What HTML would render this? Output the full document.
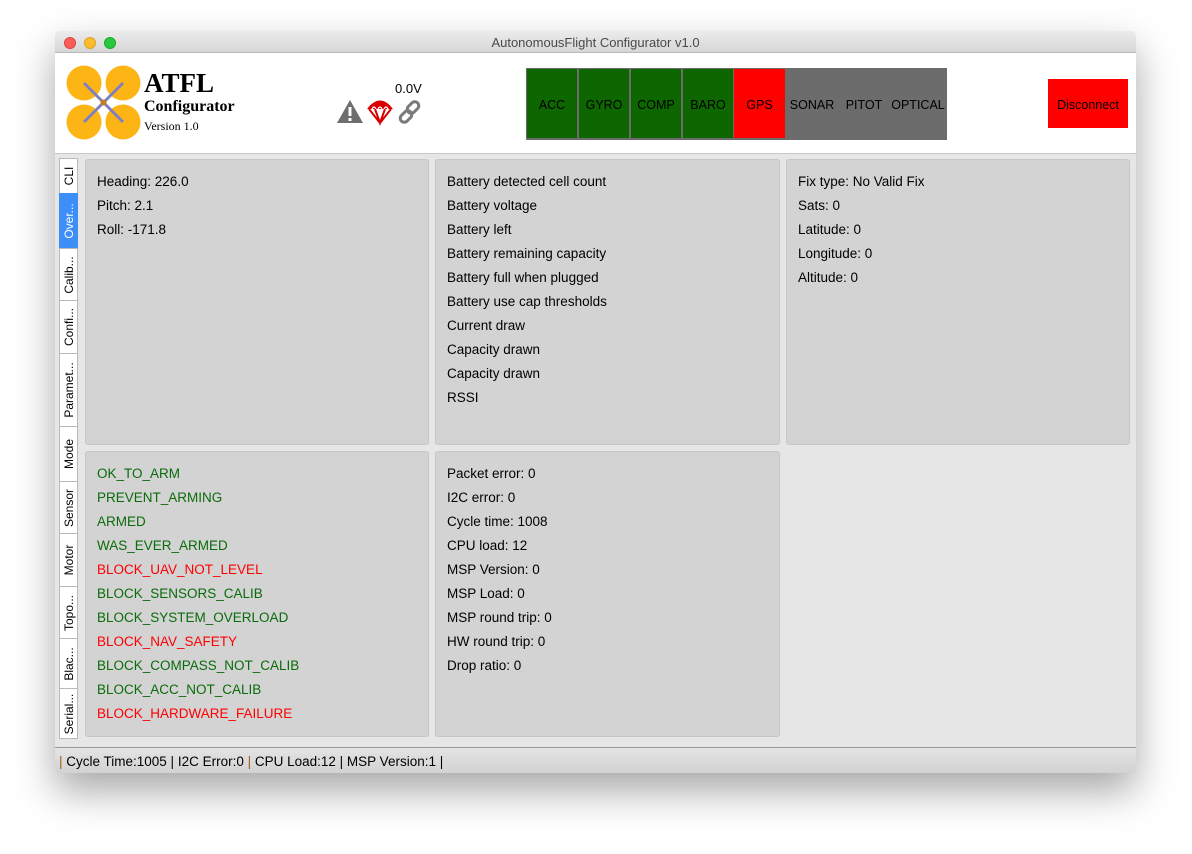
<!DOCTYPE html>
<html><head><style>
*{margin:0;padding:0;box-sizing:border-box}
body{width:1192px;height:854px;background:#fff;position:relative;overflow:hidden;font-family:"Liberation Sans",sans-serif;font-size:13px;color:#000}
.win{position:absolute;left:55px;top:31px;width:1081px;height:742px;background:#e6e6e6;box-shadow:0 18px 40px rgba(0,0,0,.35);border-radius:5px 5px 3px 3px;overflow:hidden}
.title{position:absolute;left:0;top:0;width:100%;height:22px;background:linear-gradient(#ececec,#d6d6d6);border-bottom:1px solid #b8b8b8;text-align:center;font-size:13px;line-height:23px;color:#4a4a4a}
.dot{position:absolute;top:6px;width:12px;height:12px;border-radius:50%}
.head{position:absolute;left:0;top:22px;width:100%;height:101px;background:#fff;border-bottom:1px solid #c8c8c8}
.abs{position:absolute}
.panel{position:absolute;background:#d3d3d3;border:1px solid #c6c6c6;border-radius:3px}
.panel div{height:24px;line-height:23px;font-size:13.5px}
.tabs{position:absolute;left:4px;top:127px;width:18px}
.tab{position:absolute;left:0;width:19px;background:#fff;border:1px solid #b9b9b9;}
.tab span{position:absolute;left:50%;top:50%;transform:translate(-50%,-50%) rotate(-90deg);white-space:nowrap;font-size:12px}
.g{color:#0a6b0a}.r{color:#ff0000}
.sb{position:absolute;left:0;top:716px;width:100%;height:26px;background:linear-gradient(#e4e4e4,#d2d2d2);border-top:1px solid #9a9a9a;font-size:13.5px;line-height:28px;padding-left:4px}
.cell{position:absolute;top:1px;height:69px;line-height:73px;text-align:center;font-size:12.5px;width:50px}
</style></head><body>
<div class="win">
 <div class="title">AutonomousFlight Configurator v1.0
  <div class="dot" style="left:9px;background:#fc5f57;border:1px solid #e0443e"></div>
  <div class="dot" style="left:29px;background:#fdbc2e;border:1px solid #dea123"></div>
  <div class="dot" style="left:49px;background:#28c840;border:1px solid #1aab29"></div>
 </div>
 <div class="head">
  <svg class="abs" style="left:11px;top:12px" width="75" height="75" viewBox="0 0 75 75">
   <circle cx="18" cy="18" r="17.5" fill="#fdb515"/><circle cx="57" cy="18" r="17.5" fill="#fdb515"/>
   <circle cx="18" cy="57" r="17.5" fill="#fdb515"/><circle cx="57" cy="57" r="17.5" fill="#fdb515"/>
   <line x1="18" y1="18" x2="57" y2="57" stroke="#8080c0" stroke-width="3"/>
   <line x1="57" y1="18" x2="18" y2="57" stroke="#8080c0" stroke-width="3"/>
   <circle cx="37.5" cy="37.5" r="3" fill="#c08020"/>
  </svg>
  <div class="abs" style="left:89px;top:15px;font-family:'Liberation Serif',serif;font-weight:bold;font-size:27px">ATFL</div>
  <div class="abs" style="left:89px;top:45px;font-family:'Liberation Serif',serif;font-weight:bold;font-size:16px">Configurator</div>
  <div class="abs" style="left:89px;top:66px;font-family:'Liberation Serif',serif;font-size:12px">Version 1.0</div>
  <div class="abs" style="left:340px;top:28px;font-size:13px">0.0V</div>
  <svg class="abs" style="left:281px;top:46px" width="28" height="26" viewBox="0 0 28 26"><path d="M14 1 L27 24 H1 Z" fill="#6e6e6e"/><rect x="12.5" y="8" width="3" height="9" fill="#fff"/><rect x="12.5" y="19" width="3" height="3" fill="#fff"/></svg>
  <svg class="abs" style="left:311px;top:45px" width="28" height="28" viewBox="0 0 28 28"><path d="M1 11 Q14 -6 27 11 Z" fill="#d80000"/><path d="M3 11 L14 25 L25 11 M9 11 L14 25 L19 11" stroke="#d80000" stroke-width="2" fill="none"/><path d="M6 11 Q8 7 10 11 M12 11 Q14 7 16 11 M18 11 Q20 7 22 11" stroke="#fff" stroke-width="1.2" fill="none"/></svg>
  <svg class="abs" style="left:342px;top:46px" width="26" height="26" viewBox="0 0 26 26"><g fill="none" stroke="#7a7a7a" stroke-width="3"><rect x="12" y="2" width="8" height="13" rx="4" transform="rotate(45 16 8.5)"/><rect x="5" y="11" width="8" height="13" rx="4" transform="rotate(45 9 17.5)"/></g></svg>
  <div class="abs" style="left:471px;top:15px;width:421px;height:72px;background:#6c6c6c">
   <div class="cell" style="left:1px;background:#0e6600">ACC</div>
   <div class="cell" style="left:53px;background:#0e6600">GYRO</div>
   <div class="cell" style="left:105px;background:#0e6600">COMP</div>
   <div class="cell" style="left:157px;background:#0e6600">BARO</div>
   <div class="cell" style="left:208px;width:51px;background:#ff0000">GPS</div>
   <div class="cell" style="left:260px;width:52px">SONAR</div>
   <div class="cell" style="left:312px;width:52px">PITOT</div>
   <div class="cell" style="left:364px;width:56px">OPTICAL</div>
  </div>
  <div class="abs" style="left:993px;top:26px;width:80px;height:49px;background:#ff0000;line-height:52px;text-align:center;font-size:12.5px">Disconnect</div>
 </div>
 <div class="tabs">
  <div class="tab" style="top:0;height:36px"><span>CLI</span></div>
  <div class="tab" style="top:35px;height:56px;background:#3d8ef6;border-color:#3d8ef6;color:#fff"><span>Over...</span></div>
  <div class="tab" style="top:90px;height:53px"><span>Calib...</span></div>
  <div class="tab" style="top:142px;height:54px"><span>Confi...</span></div>
  <div class="tab" style="top:195px;height:74px"><span>Paramet...</span></div>
  <div class="tab" style="top:268px;height:56px"><span>Mode</span></div>
  <div class="tab" style="top:323px;height:53px"><span>Sensor</span></div>
  <div class="tab" style="top:375px;height:54px"><span>Motor</span></div>
  <div class="tab" style="top:428px;height:53px"><span>Topo...</span></div>
  <div class="tab" style="top:480px;height:51px"><span>Blac...</span></div>
  <div class="tab" style="top:530px;height:51px"><span>Serial...</span></div>
 </div>
 <div class="panel" style="left:30px;top:128px;width:344px;height:286px;padding:10px 0 0 11px">
  <div>Heading: 226.0</div><div>Pitch: 2.1</div><div>Roll: -171.8</div>
 </div>
 <div class="panel" style="left:380px;top:128px;width:345px;height:286px;padding:10px 0 0 11px">
  <div>Battery detected cell count</div><div>Battery voltage</div><div>Battery left</div><div>Battery remaining capacity</div><div>Battery full when plugged</div><div>Battery use cap thresholds</div><div>Current draw</div><div>Capacity drawn</div><div>Capacity drawn</div><div>RSSI</div>
 </div>
 <div class="panel" style="left:731px;top:128px;width:344px;height:286px;padding:10px 0 0 11px">
  <div>Fix type: No Valid Fix</div><div>Sats: 0</div><div>Latitude: 0</div><div>Longitude: 0</div><div>Altitude: 0</div>
 </div>
 <div class="panel" style="left:30px;top:420px;width:344px;height:286px;padding:10px 0 0 11px">
  <div class="g">OK_TO_ARM</div><div class="g">PREVENT_ARMING</div><div class="g">ARMED</div><div class="g">WAS_EVER_ARMED</div><div class="r">BLOCK_UAV_NOT_LEVEL</div><div class="g">BLOCK_SENSORS_CALIB</div><div class="g">BLOCK_SYSTEM_OVERLOAD</div><div class="r">BLOCK_NAV_SAFETY</div><div class="g">BLOCK_COMPASS_NOT_CALIB</div><div class="g">BLOCK_ACC_NOT_CALIB</div><div class="r">BLOCK_HARDWARE_FAILURE</div>
 </div>
 <div class="panel" style="left:380px;top:420px;width:345px;height:286px;padding:10px 0 0 11px">
  <div>Packet error: 0</div><div>I2C error: 0</div><div>Cycle time: 1008</div><div>CPU load: 12</div><div>MSP Version: 0</div><div>MSP Load: 0</div><div>MSP round trip: 0</div><div>HW round trip: 0</div><div>Drop ratio: 0</div>
 </div>
 <div class="sb"><span style="color:#a06010">|</span> Cycle Time:1005 | I2C Error:0 <span style="color:#a06010">|</span> CPU Load:12 | MSP Version:1 |</div>
</div>
</body></html>
